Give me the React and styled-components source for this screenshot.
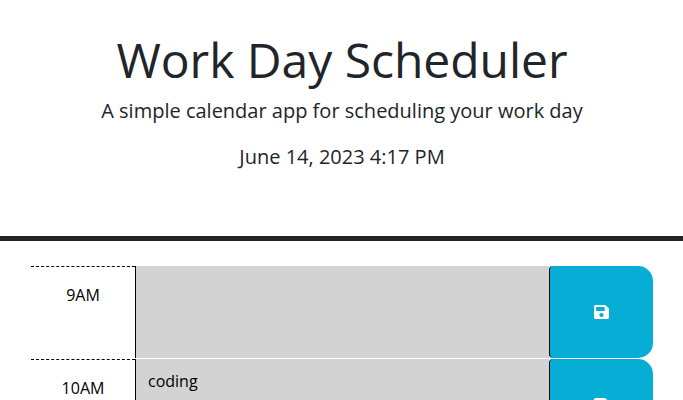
import React from 'react';
import styled, { createGlobalStyle } from 'styled-components';

const GlobalStyle = createGlobalStyle`
  *, *::before, *::after { box-sizing: border-box; }
  body { margin: 0; background: #fff; font-family: "Open Sans", sans-serif; font-size: 16px; line-height: 1.5; color: #212529; }
`;

const Page = styled.div`
  height: 400px;
  overflow: hidden;
`;

const Header = styled.header`
  height: 241px;
  padding: 31px 24px 0 25px;
  text-align: center;
  border-bottom: 5px solid #212529;
`;

const Title = styled.h1`
  margin: 0 0 7px;
  font-size: 48px;
  font-weight: 400;
  line-height: 58px;
  letter-spacing: -0.04px;
`;

const Lead = styled.p`
  margin: 0 0 16px;
  font-size: 20px;
  font-weight: 400;
  line-height: 30px;
`;

const Schedule = styled.main`
  padding: 25px 30px 0 31px;
`;

const TimeBlock = styled.section`
  display: grid;
  grid-template-columns: 104px 414px 104px;
  height: 93px;
`;

const Hour = styled.div`
  padding-top: 16px;
  text-align: center;
  color: #000;
  border-top: 1px dashed #000;
`;

const Description = styled.textarea`
  display: block;
  width: 100%;
  height: 92px;
  padding: 10px 12px;
  border: 0;
  border-left: 1px solid #000;
  outline: 0;
  resize: none;
  border-radius: 0;
  background: #d3d3d3;
  color: #000;
  font: inherit;
`;

const SaveButton = styled.button`
  display: flex;
  align-items: center;
  justify-content: center;
  height: 92px;
  padding: 0;
  border: 0;
  border-left: 1px solid #000;
  border-radius: 4px 15px 15px 4px;
  background: #06aed5;
  color: #fff;
`;

const Icon = styled.svg`
  display: block;
  width: 15px;
  height: 16px;
  margin-right: 1px;
`;

const SaveIcon = () => (
  <Icon viewBox="0 0 448 512" preserveAspectRatio="none" fill="currentColor" aria-hidden="true">
    <path d="M433.941 129.941l-83.882-83.882A48 48 0 0 0 316.118 32H48C21.49 32 0 53.49 0 80v352c0 26.51 21.49 48 48 48h352c26.51 0 48-21.49 48-48V163.882a48 48 0 0 0-14.059-33.941zM224 416c-35.346 0-64-28.654-64-64 0-35.346 28.654-64 64-64s64 28.654 64 64c0 35.346-28.654 64-64 64zm96-304.52V212c0 6.627-5.373 12-12 12H76c-6.627 0-12-5.373-12-12V108c0-6.627 5.373-12 12-12h228.52c3.183 0 6.235 1.264 8.485 3.515l3.48 3.48A11.996 11.996 0 0 1 320 111.48z" />
  </Icon>
);

const blocks = [
  { hour: '9AM', task: '' },
  { hour: '10AM', task: 'coding' },
];

export default function App() {
  return (
    <Page>
      <GlobalStyle />
      <Header>
        <Title>Work Day Scheduler</Title>
        <Lead>A simple calendar app for scheduling your work day</Lead>
        <Lead>June 14, 2023 4:17 PM</Lead>
      </Header>
      <Schedule>
        {blocks.map(({ hour, task }) => (
          <TimeBlock key={hour}>
            <Hour>{hour}</Hour>
            <Description defaultValue={task} spellCheck={false} />
            <SaveButton aria-label="save">
              <SaveIcon />
            </SaveButton>
          </TimeBlock>
        ))}
      </Schedule>
    </Page>
  );
}
